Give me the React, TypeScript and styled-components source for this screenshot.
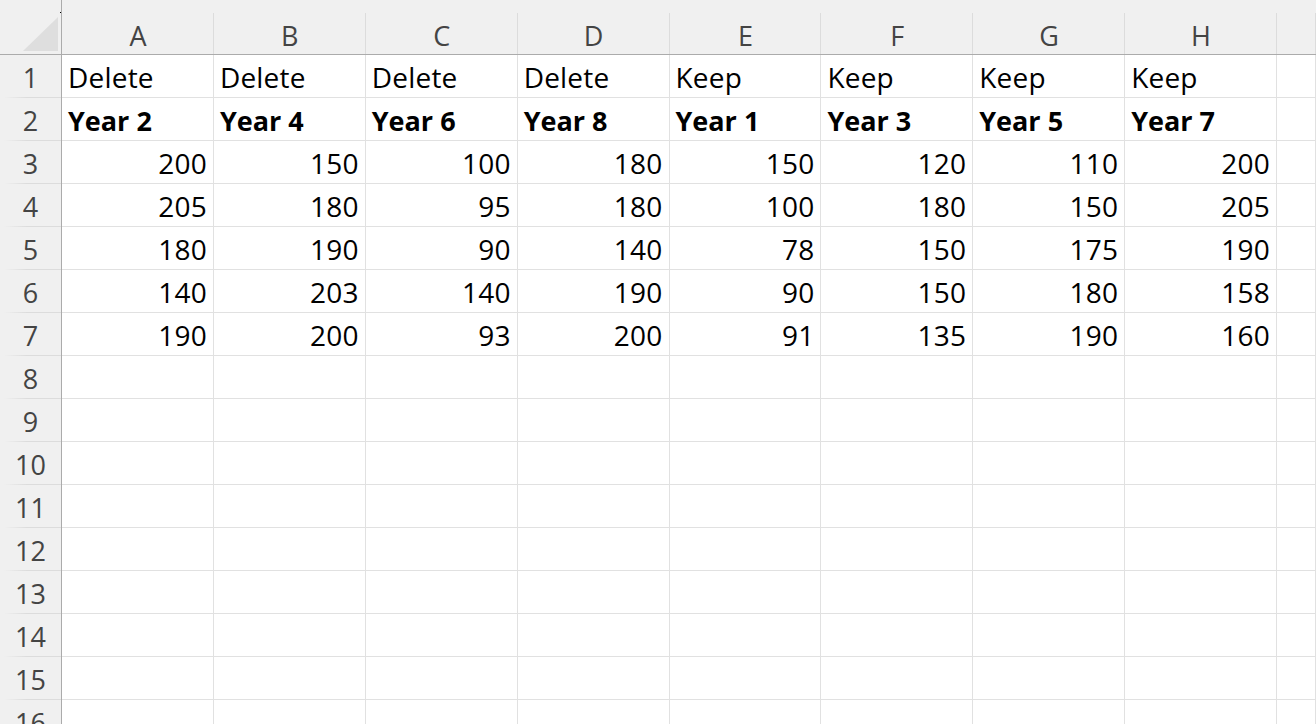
import React from 'react';
import styled, { createGlobalStyle } from 'styled-components';

const GlobalStyle = createGlobalStyle`
  html, body {
    margin: 0;
    padding: 0;
    background: #ffffff;
    overflow: hidden;
  }
`;

const COLS = ['A', 'B', 'C', 'D', 'E', 'F', 'G', 'H', 'I'];
const ROW_COUNT = 16;

const data: (string | number)[][] = [
  ['Delete', 'Delete', 'Delete', 'Delete', 'Keep', 'Keep', 'Keep', 'Keep'],
  ['Year 2', 'Year 4', 'Year 6', 'Year 8', 'Year 1', 'Year 3', 'Year 5', 'Year 7'],
  [200, 150, 100, 180, 150, 120, 110, 200],
  [205, 180, 95, 180, 100, 180, 150, 205],
  [180, 190, 90, 140, 78, 150, 175, 190],
  [140, 203, 140, 190, 90, 150, 180, 158],
  [190, 200, 93, 200, 91, 135, 190, 160],
];

const Sheet = styled.div`
  display: grid;
  grid-template-columns: 62px repeat(8, 151.875px) 1fr;
  grid-auto-rows: 43px;
  grid-template-rows: 55px;
  width: 1316px;
  height: 724px;
  overflow: hidden;
  font-family: 'Open Sans', 'Noto Sans', sans-serif;
  font-size: 27px;
  color: #000;
`;

const Corner = styled.div`
  position: relative;
  background: #f0f0f0;
  border-right: 1px solid #ababab;
  border-bottom: 1px solid #ababab;

  &::before {
    content: '';
    position: absolute;
    left: 23px;
    top: 17px;
    width: 35px;
    height: 34px;
    background: #dedede;
    clip-path: polygon(100% 0, 100% 100%, 0 100%);
  }

  &::after {
    content: '';
    position: absolute;
    right: 0;
    top: 12px;
    width: 1px;
    height: 1px;
    background: #000;
  }
`;

const ColHeader = styled.div`
  position: relative;
  background: #f0f0f0;
  border-bottom: 1px solid #ababab;
  display: flex;
  align-items: flex-end;
  justify-content: center;
  padding-bottom: 5px;
  box-sizing: border-box;
  color: #444444;
  line-height: 1;

  &::after {
    content: '';
    position: absolute;
    right: 0;
    top: 13px;
    bottom: 0;
    width: 1px;
    background: #dcdcdc;
  }
`;

const RowHeader = styled.div`
  position: relative;
  background: #f0f0f0;
  border-right: 1px solid #ababab;
  display: flex;
  align-items: center;
  justify-content: center;
  padding-top: 2px;
  box-sizing: border-box;
  color: #444444;

  &::after {
    content: '';
    position: absolute;
    left: 4px;
    right: 0;
    bottom: 0;
    height: 1px;
    background: linear-gradient(to right, rgba(220, 220, 220, 0), #dcdcdc 40%);
  }
`;

const Cell = styled.div<{ $numeric?: boolean; $bold?: boolean }>`
  border-right: 1px solid #e1e1e1;
  border-bottom: 1px solid #e1e1e1;
  box-sizing: border-box;
  display: flex;
  align-items: center;
  justify-content: ${(p) => (p.$numeric ? 'flex-end' : 'flex-start')};
  padding: 2px 6px 0 6px;
  font-size: ${(p) => (p.$bold ? '27px' : '28px')};
  letter-spacing: ${(p) => (p.$bold ? '0' : '0.2px')};
  font-weight: ${(p) => (p.$bold ? 700 : 400)};
  white-space: nowrap;
  overflow: hidden;
`;

export default function App() {
  const rows = Array.from({ length: ROW_COUNT }, (_, i) => i + 1);
  return (
    <>
      <GlobalStyle />
      <Sheet>
        <Corner />
        {COLS.map((c) => (
          <ColHeader key={c}>{c === 'I' ? '' : c}</ColHeader>
        ))}
        {rows.map((r) => (
          <React.Fragment key={r}>
            <RowHeader>{r}</RowHeader>
            {COLS.map((c, ci) => {
              const v = data[r - 1]?.[ci];
              return (
                <Cell key={c} $numeric={typeof v === 'number'} $bold={r === 2}>
                  {v ?? ''}
                </Cell>
              );
            })}
          </React.Fragment>
        ))}
      </Sheet>
    </>
  );
}
